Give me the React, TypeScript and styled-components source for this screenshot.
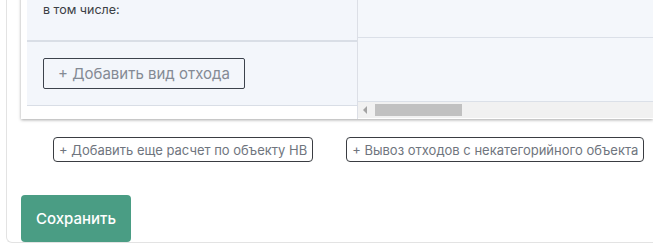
import React from "react";
import styled, { createGlobalStyle } from "styled-components";

const Global = createGlobalStyle`
  html, body { margin: 0; padding: 0; background: #fff; overflow: hidden; }
  body { font-family: Inter, "Noto Sans", sans-serif; }
`;

const Panel = styled.div`
  margin-left: 6px;
  margin-top: -12px;
  height: 255px;
  box-sizing: border-box;
  border-left: 1px solid #e3e3e3;
  border-bottom: 1px solid #e3e3e3;
  border-bottom-left-radius: 6px;
  padding-left: 14px;
  display: flex;
  flex-direction: column;
  align-items: flex-start;
`;

const Card = styled.div`
  display: flex;
  align-self: stretch;
  background: #fff;
  padding-left: 6px;
  box-shadow: 0 1px 3px rgba(0, 0, 0, 0.35);
`;

const LeftCol = styled.div`
  width: 330px;
  flex-shrink: 0;
  border-right: 1px solid #dcdfe6;
  display: flex;
  flex-direction: column;
  height: 131px;
`;

const Row = styled.div<{ $h: number; $line: number }>`
  height: ${(p) => p.$h}px;
  background: #f3f6fb;
  border-bottom: ${(p) => p.$line}px solid #d9dee6;
  display: flex;
  box-sizing: content-box;
`;

const Label = styled.div`
  font-size: 12.5px;
  color: #3b3f45;
  padding: 14px 0 0 16px;
`;

const ButtonCell = styled.div`
  padding: 16px 0 0 16px;
`;

const OutlineButton = styled.button`
  height: 31px;
  width: 202px;
  box-sizing: border-box;
  border: 1px solid #3c424c;
  border-radius: 2px;
  background: transparent;
  font-family: inherit;
  font-size: 15px;
  color: #848a94;
  text-align: center;
  padding: 0;
`;

const RightCol = styled.div`
  flex: 1;
  display: flex;
  flex-direction: column;
`;

const RightRow = styled.div<{ $h: number }>`
  height: ${(p) => p.$h}px;
  background: #f4f7fb;
  border-bottom: 1px solid #dbe0e8;
`;

const Scrollbar = styled.div`
  height: 16px;
  background: #f1f1f1;
  display: flex;
  align-items: center;
  gap: 7px;
  padding-left: 5px;
`;

const Thumb = styled.div`
  width: 87px;
  height: 12px;
  background: #c1c1c1;
`;

const Actions = styled.div`
  display: flex;
  gap: 33px;
  padding-left: 32px;
  margin-top: 18px;
`;

const SmallButton = styled.button`
  height: 25px;
  box-sizing: border-box;
  border: 1px solid #3a3d42;
  border-radius: 4px;
  background: #fff;
  font-family: inherit;
  font-size: 13px;
  color: #6f757e;
  padding: 0 5px;
  white-space: nowrap;
`;

const SaveButton = styled.button`
  margin-top: 33px;
  width: 110px;
  height: 47px;
  border: none;
  border-radius: 4px;
  background: #4a9d84;
  color: #fff;
  font-family: inherit;
  font-size: 15px;
  font-weight: 500;
`;

export default function App() {
  return (
    <>
      <Global />
      <Panel>
        <Card>
          <LeftCol>
            <Row $h={52} $line={2}>
              <Label>в том числе:</Label>
            </Row>
            <Row $h={63} $line={1}>
              <ButtonCell>
                <OutlineButton>+ Добавить вид отхода</OutlineButton>
              </ButtonCell>
            </Row>
          </LeftCol>
          <RightCol>
            <RightRow $h={49} />
            <RightRow $h={63} />
            <Scrollbar>
              <svg width="5" height="8" viewBox="0 0 5 8">
                <path d="M4 0 L0 4 L4 8 Z" fill="#a3a3a3" />
              </svg>
              <Thumb />
            </Scrollbar>
          </RightCol>
        </Card>
        <Actions>
          <SmallButton>+ Добавить еще расчет по объекту НВ</SmallButton>
          <SmallButton>+ Вывоз отходов с некатегорийного объекта</SmallButton>
        </Actions>
        <SaveButton>Сохранить</SaveButton>
      </Panel>
    </>
  );
}
